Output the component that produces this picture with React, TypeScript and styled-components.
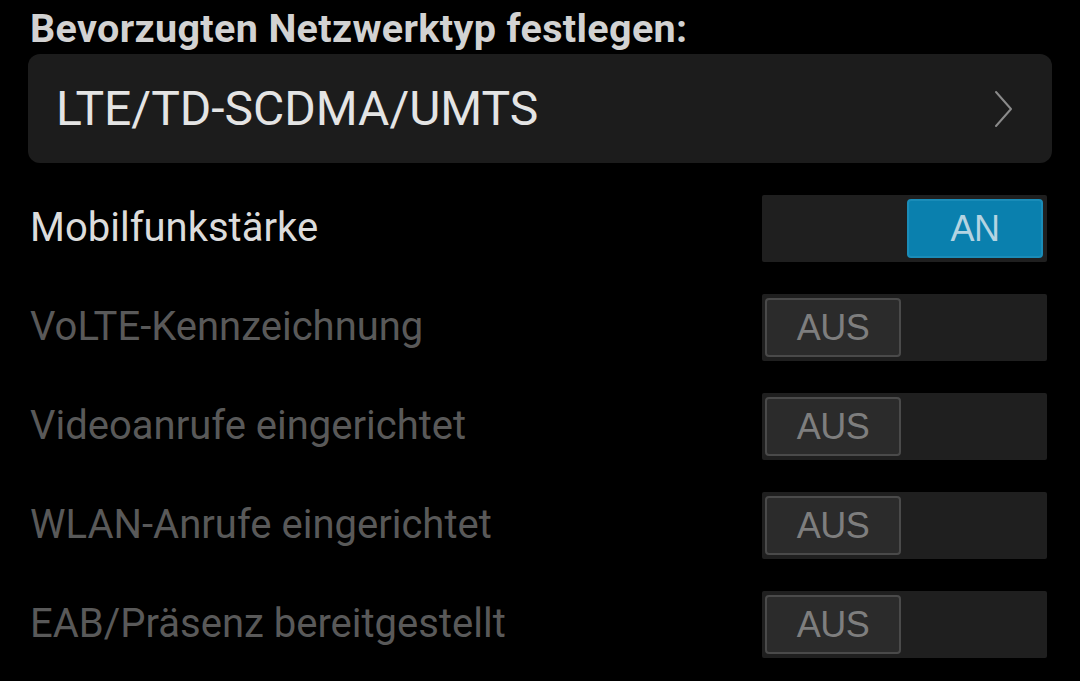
import React from "react";
import styled, { createGlobalStyle } from "styled-components";

const GlobalStyle = createGlobalStyle`
  html, body {
    margin: 0;
    padding: 0;
    background: #000;
  }
  body {
    font-family: Roboto, "Noto Sans", sans-serif;
    width: 1080px;
    height: 681px;
    overflow: hidden;
  }
`;

const Page = styled.div`
  display: flex;
  flex-direction: column;
  padding: 6px 28px 0 28px;
  background: #000;
  min-height: 681px;
  box-sizing: border-box;
`;

const Heading = styled.div`
  font-family: Roboto, sans-serif;
  font-weight: 700;
  font-size: 39.5px;
  line-height: 46px;
  color: #d2d2d2;
  margin: 0 0 2px 2px;
  letter-spacing: 0.35px;
`;

const SelectCard = styled.div`
  display: flex;
  align-items: center;
  justify-content: space-between;
  height: 109px;
  background: #1c1c1c;
  border-radius: 12px;
  padding: 0 38px 0 28px;
  box-sizing: border-box;
`;

const SelectValue = styled.span`
  font-family: Roboto, sans-serif;
  font-size: 48px;
  font-weight: 400;
  color: #e4e4e4;
`;

const Chevron = styled.svg`
  width: 20px;
  height: 38px;
`;

const Rows = styled.div`
  display: flex;
  flex-direction: column;
  gap: 32px;
  margin-top: 32px;
  margin-right: 5px;
`;

const Row = styled.div`
  display: flex;
  align-items: center;
  justify-content: space-between;
  height: 67px;
`;

const Label = styled.span<{ $disabled?: boolean }>`
  font-family: Roboto, sans-serif;
  font-size: 40px;
  color: ${(p) => (p.$disabled ? "#595959" : "#dcdcdc")};
  margin-left: 2px;
  padding-bottom: 2px;
`;

const Track = styled.div<{ $on?: boolean }>`
  display: flex;
  justify-content: ${(p) => (p.$on ? "flex-end" : "flex-start")};
  align-items: stretch;
  width: 285px;
  height: 67px;
  padding: 4px 4px 4px 3px;
  box-sizing: border-box;
  background: #1f1f1f;
  border-radius: 2px;
`;

const Knob = styled.div<{ $on?: boolean }>`
  display: flex;
  align-items: center;
  justify-content: center;
  width: 136px;
  box-sizing: border-box;
  border-radius: 4px;
  font-family: "Liberation Sans", Arial, sans-serif;
  font-size: 36px;
  letter-spacing: -0.5px;
  background: ${(p) => (p.$on ? "#0a80ae" : "#2b2b2b")};
  border: 2px solid ${(p) => (p.$on ? "#1a8cb8" : "#4a4a4a")};
  color: ${(p) => (p.$on ? "#b4d4e2" : "#7e7e7e")};
`;

const rows: { label: string; on: boolean; disabled: boolean }[] = [
  { label: "Mobilfunkstärke", on: true, disabled: false },
  { label: "VoLTE-Kennzeichnung", on: false, disabled: true },
  { label: "Videoanrufe eingerichtet", on: false, disabled: true },
  { label: "WLAN-Anrufe eingerichtet", on: false, disabled: true },
  { label: "EAB/Präsenz bereitgestellt", on: false, disabled: true },
];

export default function App() {
  return (
    <>
      <GlobalStyle />
      <Page>
        <Heading>Bevorzugten Netzwerktyp festlegen:</Heading>
        <SelectCard>
          <SelectValue>LTE/TD-SCDMA/UMTS</SelectValue>
          <Chevron viewBox="0 0 20 38">
            <polyline
              points="2,2 17,19 2,36"
              fill="none"
              stroke="#8a8a8a"
              strokeWidth="2"
              strokeLinecap="round"
              strokeLinejoin="round"
            />
          </Chevron>
        </SelectCard>
        <Rows>
          {rows.map((r) => (
            <Row key={r.label}>
              <Label $disabled={r.disabled}>{r.label}</Label>
              <Track $on={r.on}>
                <Knob $on={r.on}>{r.on ? "AN" : "AUS"}</Knob>
              </Track>
            </Row>
          ))}
        </Rows>
      </Page>
    </>
  );
}
